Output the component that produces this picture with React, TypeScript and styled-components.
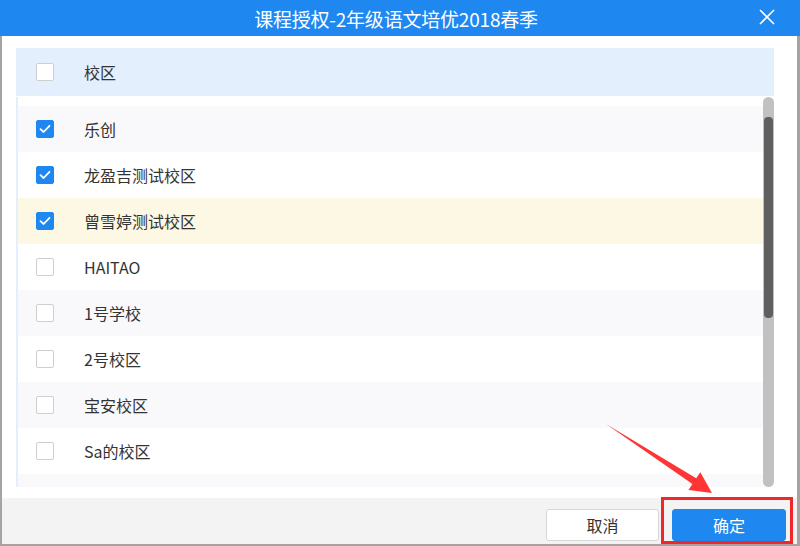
import React from 'react';
import styled, { createGlobalStyle } from 'styled-components';

const GlobalStyle = createGlobalStyle`
  html, body {
    margin: 0;
    padding: 0;
    background: #fff;
    font-family: "Noto Sans CJK SC", "Noto Sans", sans-serif;
  }
`;

interface ICampus {
  name: string,
  checked: boolean,
  hover?: boolean,
}

const campuses: ICampus[] = [
  { name: '乐创', checked: true },
  { name: '龙盈吉测试校区', checked: true },
  { name: '曾雪婷测试校区', checked: true, hover: true },
  { name: 'HAITAO', checked: false },
  { name: '1号学校', checked: false },
  { name: '2号校区', checked: false },
  { name: '宝安校区', checked: false },
  { name: 'Sa的校区', checked: false },
];

const CheckBox: React.FC<{ checked: boolean }> = ({ checked }) => (
  <Box checked={checked}>
    {checked && (
      <svg width="12" height="10" viewBox="0 0 12 10">
        <path d="M1.5 5.2 L4.6 8 L10.5 1.8" fill="none" stroke="#fff" strokeWidth="1.8" strokeLinecap="round" strokeLinejoin="round" />
      </svg>
    )}
  </Box>
);

const App: React.FC = () => {
  return (
    <>
      <GlobalStyle />
      <Dialog>
        <TitleBar>
          <Title>课程授权-2年级语文培优2018春季</Title>
          <Close>
            <svg width="16" height="16" viewBox="0 0 16 16">
              <path d="M1 1 L15 15 M15 1 L1 15" stroke="#fff" strokeWidth="1.6" />
            </svg>
          </Close>
        </TitleBar>
        <Body>
          <HeaderRow>
            <CheckBox checked={false} />
            <Label>校区</Label>
          </HeaderRow>
          <ListWrap>
            <Rows>
              <Spacer />
              {campuses.map((c, i) => (
                <Row key={c.name} striped={i % 2 === 0} hover={!!c.hover}>
                  <CheckBox checked={c.checked} />
                  <Label>{c.name}</Label>
                </Row>
              ))}
              <Row striped hover={false} />
            </Rows>
            <Track>
              <Thumb />
            </Track>
          </ListWrap>
        </Body>
        <Footer>
          <CancelButton>取消</CancelButton>
          <RedFrame>
            <OkButton>确定</OkButton>
          </RedFrame>
        </Footer>
        <Arrow width="800" height="546" viewBox="0 0 800 546">
          <polygon
            points="606,424 696.2,478.2 700.3,472.2 712,493 688.5,490 692.4,484"
            fill="#ff3535"
          />
        </Arrow>
      </Dialog>
    </>
  );
}

const Dialog = styled.div`
  position: relative;
  width: 800px;
  height: 546px;
  display: flex;
  flex-direction: column;
  box-sizing: border-box;
  overflow: hidden;
`;

const TitleBar = styled.div`
  height: 36px;
  flex: none;
  background: #1e88f0;
  display: flex;
  align-items: center;
  justify-content: center;
  position: relative;
`;

const Title = styled.div`
  color: #fff;
  font-size: 19px;
  margin-left: -8px;
  letter-spacing: -0.2px;
`;

const Close = styled.div`
  position: absolute;
  right: 25px;
  top: 9px;
  width: 16px;
  height: 16px;
  display: flex;
`;

const Body = styled.div`
  flex: 1;
  display: flex;
  flex-direction: column;
  padding: 12px 23px 11px 14px;
  border-left: 2px solid #a7a3a3;
  border-right: 3px solid #a7a3a3;
  background: #fff;
  min-height: 0;
`;

const HeaderRow = styled.div`
  height: 48px;
  flex: none;
  display: flex;
  align-items: center;
  padding-left: 20px;
  background: #e3effd;
`;

const ListWrap = styled.div`
  flex: 1;
  min-height: 0;
  display: flex;
  border-left: 2px solid #e3effd;
  margin-top: 1px;
`;

const Rows = styled.div`
  flex: 1;
  overflow: hidden;
`;

const Spacer = styled.div`
  height: 9px;
  background: #fff;
`;

const Row = styled.div<{ striped: boolean, hover: boolean }>`
  height: 46px;
  display: flex;
  align-items: center;
  padding-left: 18px;
  background: ${p => p.hover ? '#fdf8e3' : p.striped ? '#f9f9fc' : '#fff'};
`;

const Box = styled.div<{ checked: boolean }>`
  width: 18px;
  height: 18px;
  box-sizing: border-box;
  border-radius: 2px;
  display: flex;
  align-items: center;
  justify-content: center;
  flex: none;
  background: ${p => p.checked ? '#1e88f0' : '#fff'};
  border: 1px solid ${p => p.checked ? '#1e88f0' : '#cfcfcf'};
`;

const Label = styled.span`
  margin-left: 30px;
  font-size: 16px;
  color: #333;
`;

const Track = styled.div`
  width: 11px;
  flex: none;
  background: #c1c1c1;
  border-radius: 6px;
  display: flex;
  justify-content: center;
`;

const Thumb = styled.div`
  width: 9px;
  height: 201px;
  margin-top: 20px;
  border-radius: 4px;
  background: #5f5f5f;
`;

const Footer = styled.div`
  height: 46px;
  flex: none;
  display: flex;
  justify-content: flex-end;
  align-items: flex-end;
  padding-right: 4px;
  background: #f3f3f3;
  border-left: 2px solid #a7a3a3;
  border-right: 3px solid #a7a3a3;
  border-bottom: 2px solid #a7a3a3;
`;

const Button = styled.button`
  width: 113px;
  height: 32px;
  border-radius: 3px;
  font-family: "Noto Sans CJK SC", "Noto Sans", sans-serif;
  font-size: 16px;
  padding: 0;
  cursor: pointer;
`;

const CancelButton = styled(Button)`
  background: #fff;
  border: 1px solid #d6d6d6;
  color: #333;
  margin-bottom: 3px;
`;

const OkButton = styled(Button)`
  width: 114px;
  background: #1e88f0;
  border: 1px solid #1e88f0;
  color: #fff;
`;

const RedFrame = styled.div`
  margin-left: 2px;
  height: 47px;
  box-sizing: border-box;
  border: 3px solid #f0262b;
  padding: 9px 4px 0 8px;
  display: flex;
`;

const Arrow = styled.svg`
  position: absolute;
  left: 0;
  top: 0;
  pointer-events: none;
`;

export default App;
